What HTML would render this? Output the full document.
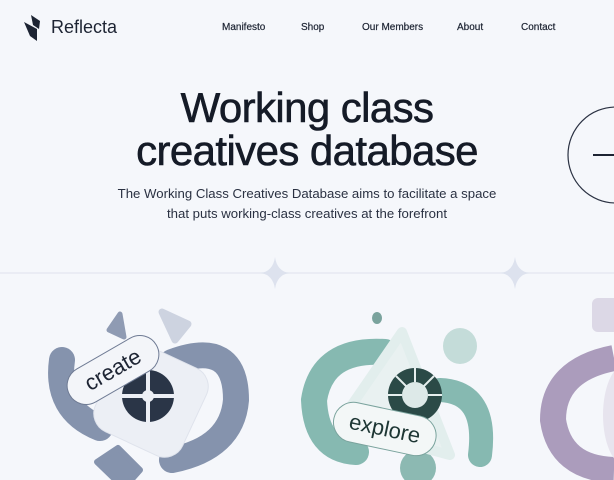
<!DOCTYPE html>
<html><head><meta charset="utf-8"><style>
html,body{margin:0;padding:0}
body{width:614px;height:480px;overflow:hidden;background:#f5f7fb;position:relative;font-family:"Liberation Sans",sans-serif;color:#1d2433}
.nav a{position:absolute;top:22px;font-size:10px;color:#1d2433;text-decoration:none;-webkit-text-stroke:0.2px #1d2433}
h1{position:absolute;top:86px;left:0;width:614px;margin:0;text-align:center;font-size:42px;font-weight:normal;line-height:43px;letter-spacing:-0.6px;color:#151b27;-webkit-text-stroke:0.6px #151b27}
p{position:absolute;top:184px;left:0;width:614px;margin:0;text-align:center;font-size:13.2px;line-height:20px;color:#2a3142}
</style></head><body>
<svg style="position:absolute;left:0;top:0" width="614" height="480">
<polygon points="31,15 40,21 39,29 33,25" fill="#1d2433"/>
<polygon points="24,22 37,29 37,41 30,36" fill="#1d2433"/>
<line x1="0" y1="273" x2="614" y2="273" stroke="#e6e9f2" stroke-width="1.5"/>
<path d="M275 257 Q277 271 289 273 Q277 275 275 289 Q273 275 261 273 Q273 271 275 257Z" fill="#dde2ee"/>
<path d="M515 257 Q517 271 529 273 Q517 275 515 289 Q513 275 501 273 Q513 271 515 257Z" fill="#dde2ee"/>
<circle cx="616" cy="155" r="48" fill="none" stroke="#2a3142" stroke-width="1.2"/>
<line x1="593" y1="155" x2="614" y2="155" stroke="#1d2433" stroke-width="2"/>
<!-- left -->
<polygon points="109,330 120,314 124,337" fill="#8f9bb3" stroke="#8f9bb3" stroke-width="5" stroke-linejoin="round"/>
<polygon points="162,312 188,324 175,340" fill="#cdd3e0" stroke="#cdd3e0" stroke-width="7" stroke-linejoin="round"/>
<polygon points="97,462 118,448 140,470 124,488" fill="#8593ad" stroke="#8593ad" stroke-width="6" stroke-linejoin="round"/>
<path d="M62 360 Q55 410 100 428" fill="none" stroke="#8593ad" stroke-width="26" stroke-linecap="round"/>
<path d="M172 362 Q236 338 236 400 Q232 448 172 460" fill="none" stroke="#8593ad" stroke-width="26" stroke-linecap="round"/>
<rect x="103" y="352" width="96" height="96" rx="20" fill="#eceff5" stroke="#dfe3ec" transform="rotate(25 151 400)"/>
<circle cx="148" cy="396" r="26" fill="#2a3547"/>
<g stroke="#eceff5" stroke-width="4"><line x1="148" y1="368" x2="148" y2="424"/><line x1="120" y1="396" x2="176" y2="396"/></g>
<circle cx="148" cy="396" r="6" fill="#eceff5"/>
<g transform="rotate(-30 113 370)">
<rect x="63" y="351" width="100" height="38" rx="19" fill="#f3f5f9" stroke="#6f7b94"/>
<text x="113" y="377" text-anchor="middle" font-size="22" fill="#1d2433" font-family="Liberation Sans">create</text>
</g>
<!-- middle -->
<ellipse cx="377" cy="318" rx="5" ry="6" fill="#7aa39d"/>
<ellipse cx="460" cy="346" rx="17" ry="18" fill="#c4dcd9"/>
<circle cx="418" cy="468" r="18" fill="#8cb9b2"/>
<path d="M385 352 Q322 348 314 400 Q316 450 356 452" fill="none" stroke="#86b9b1" stroke-width="26" stroke-linecap="round"/>
<path d="M440 390 Q488 392 480 455" fill="none" stroke="#86b9b1" stroke-width="24" stroke-linecap="round"/>
<polygon points="402,332 450,455 338,425" fill="#e9f1f1" stroke="#e2eeed" stroke-linejoin="round" stroke-width="10"/>
<circle cx="415" cy="395" r="27" fill="#2b4a47"/>
<circle cx="415" cy="395" r="13" fill="#dde9e8"/>
<g stroke="#e6efee" stroke-width="2">
<line x1="415" y1="368" x2="415" y2="382"/><line x1="434" y1="376" x2="424" y2="386"/><line x1="442" y1="395" x2="428" y2="395"/><line x1="396" y1="376" x2="406" y2="386"/><line x1="388" y1="395" x2="402" y2="395"/>
</g>
<g transform="rotate(12 385 428)">
<rect x="333" y="409" width="104" height="40" rx="20" fill="#f3f7f7" stroke="#7aa39d"/>
<text x="385" y="436" text-anchor="middle" font-size="22" fill="#1d3634" font-family="Liberation Sans">explore</text>
</g>
<!-- right -->
<rect x="592" y="298" width="30" height="34" rx="6" fill="#dcd8e6"/>
<path d="M614 358 Q553 370 553 420 Q560 468 614 470" fill="none" stroke="#ab9cbc" stroke-width="26"/>
<ellipse cx="625" cy="415" rx="22" ry="50" fill="#e7e4ee"/>
</svg>
<div style="position:absolute;left:51px;top:17px;font-size:18px;color:#1d2433">Reflecta</div>
<div class="nav">
<a style="left:222px">Manifesto</a><a style="left:301px">Shop</a><a style="left:362px">Our Members</a><a style="left:457px">About</a><a style="left:521px">Contact</a>
</div>
<h1>Working class<br>creatives database</h1>
<p>The Working Class Creatives Database aims to facilitate a space<br>that puts working-class creatives at the forefront</p>
</body></html>
